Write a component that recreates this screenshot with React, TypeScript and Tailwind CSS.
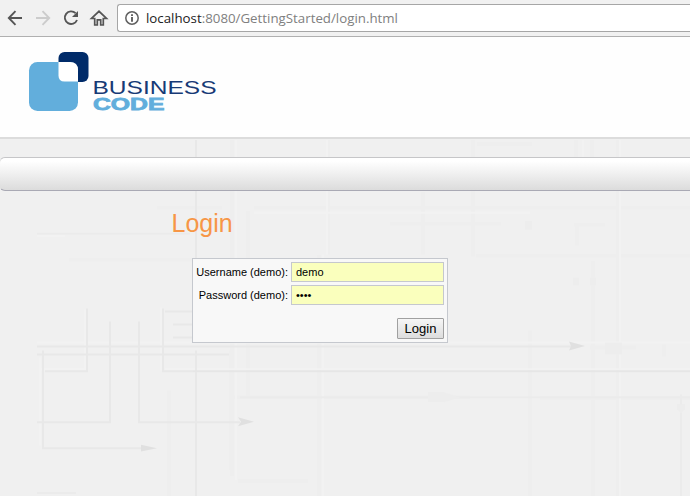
import React from "react";

function Backdrop() {
  return (
    <svg className="absolute inset-0 h-full w-full" viewBox="0 138 690 358" fill="none" preserveAspectRatio="none">
      {/* faint wide bands */}
      <g stroke="#eeeeee" strokeWidth="4">
        <path d="M232 139V476M248 210V396M328 139V254M319 254V496M423 191V254M473 139V256M576 139V168M592 139V168M530 330V496M618 139V496M593 260V496M169 390V496M231 350V470" />
        <path d="M157 207H222M254 207H690M390 223H501M476 255H690M477 143H532M574 224H605M577 223V245M540 398H690M230 397H470M238 481H308" />
        <path d="M664 344V356M69 259H192M590 347H636" />
      </g>
      <g stroke="#f2f2f2" strokeWidth="2">
        <path d="M236 139V480M327 139V254M323 254V496M620 139V496M583 139V158" />
        <path d="M37 235H65M254 212H530M37 342H690M40 357V445M85 309V370M161 307V370M87 369H40M165 369H690" />
      </g>
      {/* sharper circuit lines */}
      <g stroke="#e8e8e8" strokeWidth="2">
        <path d="M196 139V259M196 350V496" />
        <path d="M37 346H572M37 354H229M43 350V448H142M87 308V371H45M110 321V422H37M139 321V422H240" />
        <path d="M163 308V371H193M165 311H193M173 324H193M173 337H193" />
      </g>
      <path d="M193 371H690" stroke="#e6e6e6" strokeWidth="2" />
      <g stroke="#ebebeb" strokeWidth="2">
        <path d="M37 233H190M240 397H690M681 394V496M37 493H76" />
      </g>
      <g fill="#e0e0e0">
        <path d="M569 341L585 345.5L569 350L571 345.5Z" />
        <path d="M141 444.5L157 448L141 451.5Z" />
        <path d="M238 417L254 421.5L238 426L241 421.5Z" />
      </g>
      <g fill="#ededed">
        <path d="M428 392H444L460 397L444 402H428Z" />
        <path d="M677 404H685V409L681 413L677 409Z" />
        <path d="M573 277H579V285H573ZM590 277H596V285H590ZM525 220H532V229H525ZM605 342H622V354H605Z" />
      </g>
    </svg>
  );
}

function Toolbar() {
  return (
    <div className="flex h-[37px] shrink-0 items-start border-b border-[#b0b0b0] bg-[#f1f1f1]">
      <svg className="h-9 w-[117px] shrink-0" viewBox="0 0 117 36" fill="none" strokeWidth="1.9">
        <path d="M22 18H9M15.5 11.2L8.8 18L15.5 24.8" stroke="#555" />
        <path d="M36 18H49M42.5 11.2L49.2 18L42.5 24.8" stroke="#ccc" />
        <path d="M75.6 13.2A6.3 6.3 0 1 0 77 20" stroke="#555" />
        <path d="M78 11V17H72Z" fill="#555" />
        <path d="M91.5 18.5H94.7V25H97.3V19.8H100.7V25H103.3V18.5H106.5L99 11.3Z" stroke="#555" strokeWidth="1.7" />
      </svg>
      <div className="mt-1 flex h-7 flex-1 items-center rounded-l-[3px] border border-r-0 border-[#a6a6a6] bg-white pl-[7px]">
        <svg className="size-[14px] shrink-0" viewBox="0 0 14 14">
          <circle cx="7" cy="7" r="6.2" fill="none" stroke="#606060" strokeWidth="1.5" />
          <path d="M6.1 3.2h1.8v1.8H6.1zM6.1 6.1h1.8v4.7H6.1z" fill="#555" />
        </svg>
        <svg className="ml-[7px] h-[26px] w-[260px] overflow-visible" viewBox="0 0 260 26">
          <text x="0" y="18" textLength="252" lengthAdjust="spacingAndGlyphs" className="font-['Open_Sans',sans-serif] text-[13.5px]" fill="#808080">
            <tspan fill="#222">localhost</tspan>:8080/GettingStarted/login.html
          </text>
        </svg>
      </div>
    </div>
  );
}

function Logo() {
  return (
    <svg className="ml-7 mt-[14px] h-[62px] w-[190px] overflow-visible" viewBox="28 51 190 62">
      <rect x="58.5" y="52" width="30" height="30" rx="6" fill="#002b69" />
      <rect x="29" y="62" width="49" height="49" rx="8.5" fill="#62aedc" />
      <path d="M58.5 62H70Q78 62 78 70V81.5H64.5Q58.5 81.5 58.5 75.5Z" fill="#fff" />
      <text x="92.5" y="93.5" textLength="124" lengthAdjust="spacingAndGlyphs" className="font-['Liberation_Sans',sans-serif] text-[18px]" fill="#173a76">BUSINESS</text>
      <text x="93" y="110.3" textLength="71.5" lengthAdjust="spacingAndGlyphs" className="font-['Liberation_Sans',sans-serif] text-[17px] font-bold" fill="#62aedc" stroke="#62aedc" strokeWidth="0.8">CODE</text>
    </svg>
  );
}

export default function App() {
  return (
    <div className="flex h-[496px] w-[690px] flex-col overflow-hidden bg-[#f0f0f0] font-['Liberation_Sans',Arial,sans-serif] text-black">
      <Toolbar />
      <header className="h-[102px] shrink-0 border-b-2 border-[#dcdcdc] bg-[#fefefe]">
        <Logo />
      </header>
      <main className="relative flex-1">
        <Backdrop />
        <div className="relative pt-[18px]">
          <nav className="-mr-2 -ml-px h-[34px] rounded-[6px] border border-t-[#c6c6c8] border-r-[#c6c6c8] border-b-[#a9a9b4] border-l-[#e0e0e0] bg-linear-to-b from-white from-10% to-[#dcdcdc]" />
          <h1 className="ml-[171.5px] mt-[17px] text-[25px] leading-[30px] text-[#f79646]">Login</h1>
          <form className="ml-48 mt-5 h-[85px] w-64 border border-[#c5c8ce] bg-[#f8f8f8] px-[3px] pt-[3px] text-[11px]">
            <div className="flex h-5 items-center justify-end">
              <label className="mr-[3px] whitespace-nowrap">Username (demo):</label>
              <div className="flex h-5 w-[153px] shrink-0 items-center border border-[#c5c8ce] bg-[#faffbd] pl-1">demo</div>
            </div>
            <div className="mt-[3px] flex h-5 items-center justify-end">
              <label className="mr-[3px] whitespace-nowrap">Password (demo):</label>
              <div className="flex h-5 w-[153px] shrink-0 items-center border border-[#c5c8ce] bg-[#faffbd] pl-1">••••</div>
            </div>
            <div className="mt-[13px] flex justify-end">
              <button type="button" className="h-[21px] w-[47px] rounded-[1px] border border-[#a0a0a0] bg-linear-to-b from-[#f6f6f6] to-[#dddddd] text-[13px] leading-[19px]">Login</button>
            </div>
          </form>
        </div>
      </main>
    </div>
  );
}
